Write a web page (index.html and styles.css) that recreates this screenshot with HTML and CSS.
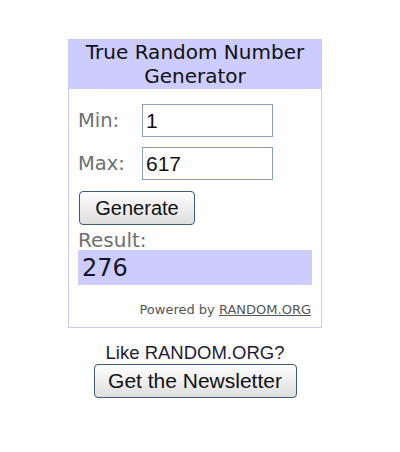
FILE: index.html
```html
<!DOCTYPE html>
<html lang="en">
  <head>
    <meta charset="utf-8" />
    <meta name="viewport" content="width=device-width, initial-scale=1" />
    <title>True Random Number Generator</title>
    <link rel="stylesheet" href="styles.css">
  </head>
  <body>
    <div class="wrap">
      <!-- the generator widget -->
      <div class="widget">
        <div class="widget-head">True Random Number Generator</div>
        <div class="widget-body">
          <div class="row">
            <label class="lbl" for="min">Min:</label>
            <input class="field" type="text" id="min" value="1" />
          </div>
          <div class="row">
            <label class="lbl" for="max">Max:</label>
            <input class="field" type="text" id="max" value="617" />
          </div>
          <button class="btn gen-btn" type="button">Generate</button>
          <div class="result-lbl">Result:</div>
          <div class="result">276</div>
          <div class="powered">Powered by <a href="#">RANDOM.ORG</a></div>
        </div>
      </div>

      <div class="news">
        <p>Like RANDOM.ORG?</p>
        <button class="btn news-btn" type="button">Get the Newsletter</button>
      </div>
    </div>
  </body>
</html>
```

FILE: styles.css
```css
body {
  margin: 0;
  background: #fff;
}

.wrap {
  width: 254px;
  margin-left: 68px;
  margin-top: 39px;
}

.widget {
  border: 1px solid #c9c9f2;
  background: #fff;
}

.widget-head {
  background: #ccccff;
  font-family: "DejaVu Sans", Verdana, sans-serif;
  font-size: 20px;
  line-height: 24px;
  color: #111;
  text-align: center;
  padding: 0 4px 1px;
  height: 48px;
}

.widget-body {
  padding: 15px 9px 10px;
}

.row {
  display: flex;
  align-items: center;
  margin-bottom: 10px;
}

.lbl {
  width: 64px;
  font-family: "DejaVu Sans", Verdana, sans-serif;
  font-size: 19.5px;
  color: #6f6f6f;
}

.field {
  width: 131px;
  height: 33px;
  box-sizing: border-box;
  border: 1px solid #8ba1bb;
  padding: 0 3px;
  font-family: "Liberation Sans", Arial, sans-serif;
  font-size: 21px;
  color: #111;
}

.btn {
  box-sizing: border-box;
  height: 34px;
  border: 1px solid #3d5b7c;
  border-radius: 4px;
  background: linear-gradient(#fdfdfd, #ebebeb 60%, #dedede);
  font-family: "Liberation Sans", Arial, sans-serif;
  font-size: 20px;
  color: #111;
  padding: 0;
  cursor: pointer;
}

.gen-btn {
  width: 116px;
  margin-top: 1px;
  margin-left: 1px;
}

.result-lbl {
  font-family: "DejaVu Sans", Verdana, sans-serif;
  font-size: 20px;
  line-height: 20px;
  color: #6f6f6f;
  margin-top: 5px;
}

.result {
  background: #ccccff;
  height: 35px;
  line-height: 36px;
  padding-left: 4px;
  font-family: "DejaVu Sans", Verdana, sans-serif;
  font-size: 24px;
  color: #15152a;
}

.powered {
  text-align: right;
  font-family: "DejaVu Sans", Verdana, sans-serif;
  font-size: 13px;
  line-height: 15px;
  color: #555;
  margin-top: 17px;
  padding-right: 1px;
}

.powered a {
  color: #555;
}

.news {
  text-align: center;
  margin-top: 14px;
}

.news p {
  margin: 0;
  font-family: "Liberation Sans", Arial, sans-serif;
  font-size: 18.5px;
  line-height: 22px;
  color: #1c1c36;
}

.news-btn {
  width: 203px;
  font-size: 21px;
}
```
